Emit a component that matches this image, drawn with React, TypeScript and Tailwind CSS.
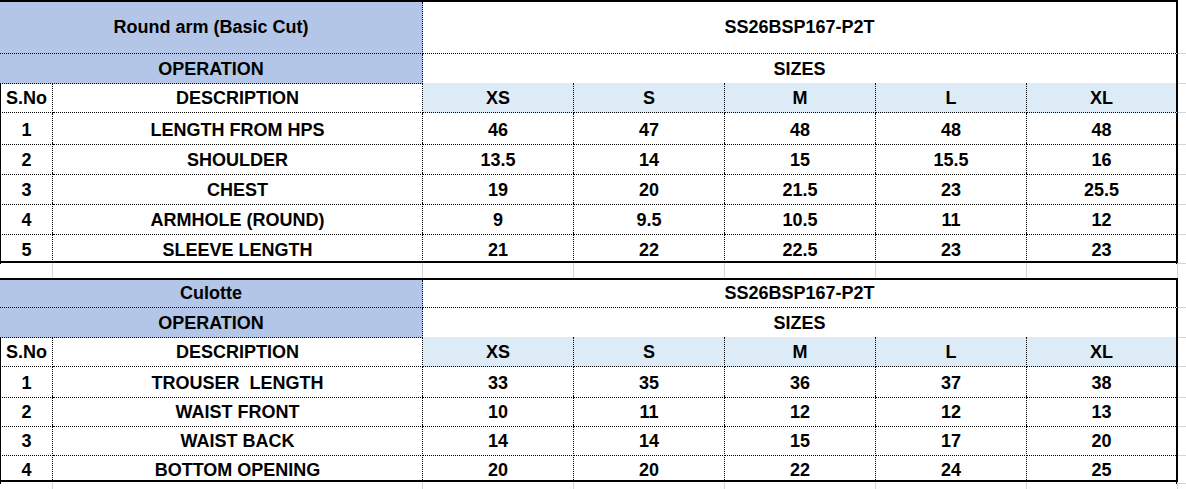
import React from 'react';

type SpecRow = [number, string, ...(string | number)[]];

const GRID = 'grid grid-cols-[53px_370px_151px_151px_151px_151px_151px_8px]';
const DOT = 'border-dotted border-black';
const GRAY = 'border-[#d4d4d4]';
const BLUE = 'bg-[#b4c6e7]';
const PALE = 'bg-[#ddebf7]';
const SIZES = ['XS', 'S', 'M', 'L', 'XL'];

const roundArm: SpecRow[] = [
  [1, 'LENGTH FROM HPS', 46, 47, 48, 48, 48],
  [2, 'SHOULDER', 13.5, 14, 15, 15.5, 16],
  [3, 'CHEST', 19, 20, 21.5, 23, 25.5],
  [4, 'ARMHOLE (ROUND)', 9, 9.5, 10.5, 11, 12],
  [5, 'SLEEVE LENGTH', 21, 22, 22.5, 23, 23],
];

const culotte: SpecRow[] = [
  [1, 'TROUSER  LENGTH', 33, 35, 36, 37, 38],
  [2, 'WAIST FRONT', 10, 11, 12, 12, 13],
  [3, 'WAIST BACK', 14, 14, 15, 17, 20],
  [4, 'BOTTOM OPENING', 20, 20, 22, 24, 25],
];

const Cell: React.FC<{ className?: string; children?: React.ReactNode }> = ({ className = '', children }) => (
  <div className={`flex items-center justify-center whitespace-pre ${className}`}>{children}</div>
);

const Outside: React.FC<{ line?: boolean }> = ({ line = true }) => (
  <div className={line ? `border-b ${GRAY}` : ''} />
);

const Bar = () => (
  <div className={`${GRID} h-[2px]`}>
    <div className="col-span-7 bg-black" />
    <div />
  </div>
);

// light grey sheet gridlines, used for the spacer row and the strip below
const GridGap: React.FC<{ h: string }> = ({ h }) => (
  <div className={`${GRID} ${h}`}>
    {[0, 1, 2, 3, 4, 5, 6].map((i) => (
      <div key={i} className={`border-r ${GRAY}`} />
    ))}
    <div />
  </div>
);

type TableProps = {
  title: string;
  code: string;
  rows: SpecRow[];
  titleH: string;
  headH: string;
  rowH: string;
  lastH: string;
};

const SpecTable: React.FC<TableProps> = ({ title, code, rows, titleH, headH, rowH, lastH }) => (
  <div>
    <Bar />
    <div className={`${GRID} ${titleH}`}>
      <Cell className={`col-span-2 ${BLUE} border-r border-b ${DOT}`}>{title}</Cell>
      <Cell className={`col-span-5 border-b ${DOT} border-r-2 [border-right-style:solid]`}>{code}</Cell>
      <Outside />
    </div>
    <div className={`${GRID} ${headH}`}>
      <Cell className={`col-span-2 ${BLUE} border-r border-b ${DOT} pt-[2px]`}>OPERATION</Cell>
      <Cell className={`col-span-5 border-b ${DOT} border-r-2 [border-right-style:solid] pt-[2px]`}>SIZES</Cell>
      <Outside />
    </div>
    <div className={`${GRID} ${rowH}`}>
      <Cell className={`border-l border-r border-b ${DOT} [border-left-style:solid] pt-[2px]`}>S.No</Cell>
      <Cell className={`border-r border-b ${DOT} pt-[2px]`}>DESCRIPTION</Cell>
      {SIZES.map((s, i) => (
        <Cell
          key={s}
          className={`${PALE} border-b ${DOT} pt-[2px] ${
            i === 4 ? 'border-r-2 [border-right-style:solid]' : 'border-r'
          }`}
        >
          {s}
        </Cell>
      ))}
      <Outside />
    </div>
    {rows.map((r, idx) => {
      const last = idx === rows.length - 1;
      const bottom = last ? '' : 'border-b';
      return (
        <div key={r[0]} className={`${GRID} ${last ? lastH : rowH}`}>
          <Cell className={`border-l border-r ${bottom} ${DOT} [border-left-style:solid] pt-[4px]`}>{r[0]}</Cell>
          <Cell className={`border-r ${bottom} ${DOT} pt-[4px]`}>{r[1]}</Cell>
          {r.slice(2).map((v, i) => (
            <Cell
              key={i}
              className={`${bottom} ${DOT} pt-[4px] ${
                i === 4 ? 'border-r-2 [border-right-style:solid]' : 'border-r'
              }`}
            >
              {v}
            </Cell>
          ))}
          <Outside />
        </div>
      );
    })}
    <Bar />
  </div>
);

export default function App() {
  return (
    <div className="w-[1186px] h-[489px] overflow-hidden bg-white text-black font-bold text-[18px] font-['Liberation_Sans',Arial,sans-serif]">
      <SpecTable
        title="Round arm (Basic Cut)"
        code="SS26BSP167-P2T"
        rows={roundArm}
        titleH="h-[52px]"
        headH="h-[29px]"
        rowH="h-[30px]"
        lastH="h-[28px]"
      />
      <GridGap h="h-[15px]" />
      <SpecTable
        title="Culotte"
        code="SS26BSP167-P2T"
        rows={culotte}
        titleH="h-[28px]"
        headH="h-[29px]"
        rowH="h-[29px]"
        lastH="h-[27px]"
      />
      <GridGap h="h-[7px]" />
    </div>
  );
}
